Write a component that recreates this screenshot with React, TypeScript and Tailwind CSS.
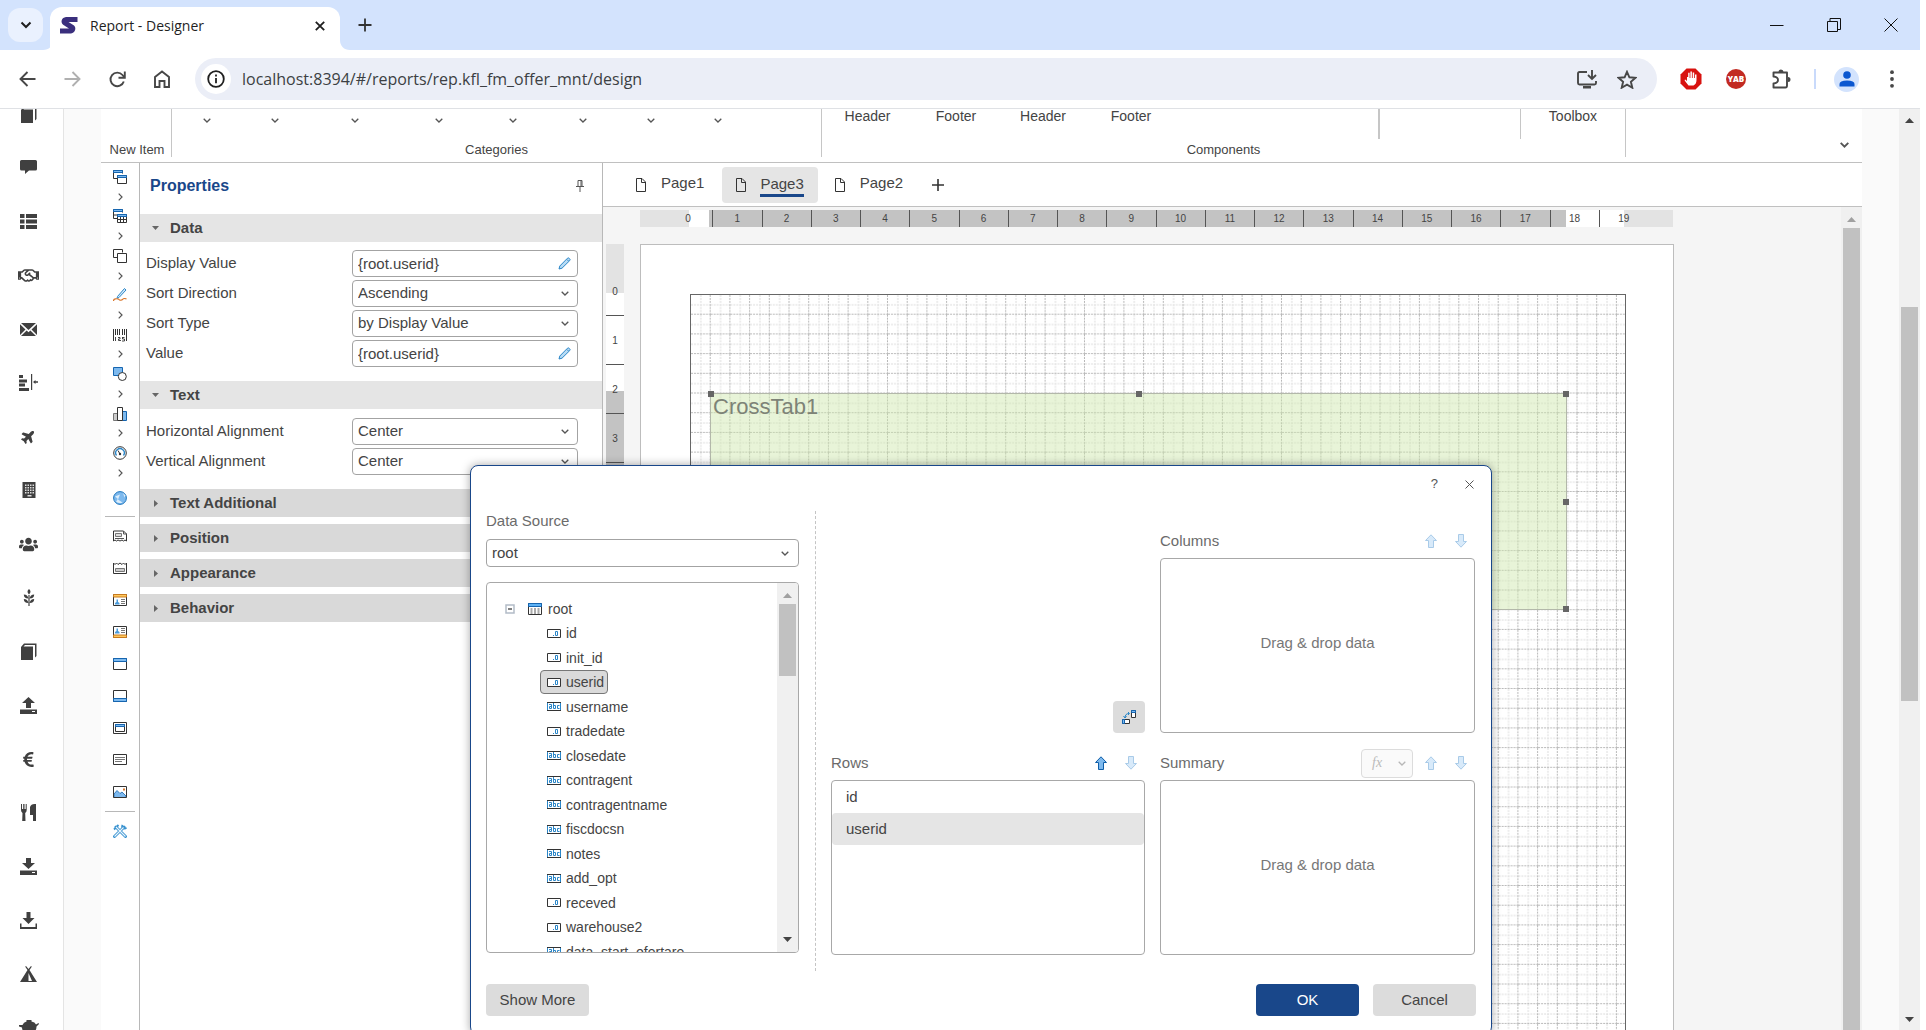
import React from "react";
import { FaRegHandshake, FaPlane, FaUsers, FaEuroSign } from "react-icons/fa";

type SvgProps = { w?: number; h?: number; box?: string; className?: string; children: React.ReactNode };

function Svg({ w = 16, h = 16, box, className = "", children }: SvgProps) {
  return (
    <svg width={w} height={h} viewBox={box ?? `0 0 ${w} ${h}`} fill="none" className={`block shrink-0 ${className}`} aria-hidden="true">
      {children}
    </svg>
  );
}

const Chevron = ({ className = "" }: { className?: string }) => (
  <Svg w={8} h={5} className={className}>
    <path d="M.7.7 4 4 7.3.7" stroke="#555" strokeWidth="1.3" />
  </Svg>
);

const Tri = ({ up = false, color = "#444" }: { up?: boolean; color?: string }) => (
  <Svg w={9} h={5}>
    <path d={up ? "M0 5 4.5 0 9 5Z" : "M0 0 4.5 5 9 0Z"} fill={color} />
  </Svg>
);

/* ---------- Browser chrome ---------- */

function TabStrip() {
  return (
    <header className="flex h-[50px] shrink-0 items-end bg-[#d3e3fd] pl-2">
      <button aria-label="Search tabs" className="mb-2 flex h-[34px] w-[35px] items-center justify-center rounded-xl bg-[#eaf1fe]">
        <Svg w={12} h={8}>
          <path d="m1.5 1.5 4.5 4.5 4.5-4.5" stroke="#1f1f1f" strokeWidth="2" />
        </Svg>
      </button>
      <Svg w={10} h={10} className="-mr-px">
        <path d="M10 0v10H0C6 10 10 6 10 0Z" fill="#fff" />
      </Svg>
      <div className="ml-[-2px] flex h-[43px] w-[290px] items-center rounded-t-xl bg-white pb-1.5 pl-[10px]">
        <Svg w={18} h={17}>
          <path d="M6 0H17.500V5H8.500L14 8.500C16.500 10.500 15.500 16 11 16.500H0V11.500H9L3.500 8C0 5.500 1.500.5 6 0Z" fill="#3a2f7d" />
        </Svg>
        <span className="ml-3 flex-1 text-sm text-[#1f1f1f]">Report - Designer</span>
        <button aria-label="Close tab" className="mr-[15px]">
          <Svg w={10} h={10}>
            <path d="m.8.8 8.400 8.400M9.200.8.8 9.200" stroke="#1f1f1f" strokeWidth="1.800" />
          </Svg>
        </button>
      </div>
      <Svg w={10} h={10}>
        <path d="M0 0v10H10C4 10 0 6 0 0Z" fill="#fff" />
      </Svg>
      <button aria-label="New tab" className="mb-[18px] ml-2">
        <Svg w={14} h={14}>
          <path d="M7 .5v13M.5 7h13" stroke="#333" strokeWidth="1.800" />
        </Svg>
      </button>
      <div className="mb-[18px] ml-auto flex items-center gap-[43px] pr-[22px]">
        <button aria-label="Minimize">
          <Svg w={14} h={14}><path d="M0 7.500h13.500" stroke="#111" /></Svg>
        </button>
        <button aria-label="Restore">
          <Svg w={14} h={14}><path d="M.5 3.500h10v10H.5ZM3 3V.5h10.500v11H11" stroke="#111" /></Svg>
        </button>
        <button aria-label="Close window">
          <Svg w={14} h={14}><path d="m.5.5 13 13M13.500.5l-13 13" stroke="#111" /></Svg>
        </button>
      </div>
    </header>
  );
}

function AddressBar() {
  return (
    <nav className="flex h-[59px] shrink-0 items-center border-b border-[#dfe1e5] bg-white pl-[19px] pr-[25px]">
      <button aria-label="Back">
        <Svg w={17} h={16}><path d="M16.500 8H1.500M8.500 1 1.500 8l7 7" stroke="#474747" strokeWidth="1.900" /></Svg>
      </button>
      <button aria-label="Forward" className="ml-7">
        <Svg w={17} h={16}><path d="M.5 8h15M8.500 1l7 7-7 7" stroke="#b0b0b0" strokeWidth="1.900" /></Svg>
      </button>
      <button aria-label="Reload" className="ml-7">
        <Svg w={17} h={17}>
          <path d="M14.800 10.500A6.800 6.800 0 1 1 13.500 4L15 5.800" stroke="#474747" strokeWidth="1.900" />
          <path d="M15.800.5v6.300H9.500" stroke="#474747" strokeWidth="1.900" />
        </Svg>
      </button>
      <button aria-label="Home" className="ml-7">
        <Svg w={16} h={18}><path d="M1 7 8 1.500 15 7v10h-4.500v-6h-5v6H1Z" stroke="#474747" strokeWidth="1.900" /></Svg>
      </button>
      <div className="ml-[25px] flex h-[42px] flex-1 items-center rounded-full bg-[#ebeef7] pl-[6px] pr-[20px]">
        <span className="flex size-[30px] items-center justify-center rounded-full bg-white">
          <Svg w={18} h={18}>
            <circle cx="9" cy="9" r="7.800" stroke="#1f1f1f" strokeWidth="1.800" />
            <path d="M9 8v5.200M9 4.600v1.900" stroke="#1f1f1f" strokeWidth="1.800" />
          </Svg>
        </span>
        <input aria-label="Address" defaultValue="localhost:8394/#/reports/rep.kfl_fm_offer_mnt/design" className="ml-[11px] min-w-0 flex-1 bg-transparent text-base text-[#3c3f43] outline-none" />
        <Svg w={20} h={19} className="mr-5">
          <path d="M10 2H2.500Q1 2 1 3.500V13Q1 14.500 2.500 14.500H17.500Q19 14.500 19 13V11" stroke="#474747" strokeWidth="1.900" />
          <path d="M6 16h8v2.500H6Z" fill="#474747" />
          <path d="M15 0v8M11 5l4 4 4-4" stroke="#474747" strokeWidth="1.900" />
        </Svg>
        <Svg w={20} h={19}>
          <path d="m10 1.800 2.400 5.500 6 .5-4.500 4 1.400 5.900L10 14.600l-5.300 3.100 1.400-5.900-4.500-4 6-.5Z" stroke="#474747" strokeWidth="1.900" />
        </Svg>
      </div>
      <Svg w={22} h={22} className="ml-[23px]">
        <path d="M6.500.5h9l6 6v9l-6 6h-9l-6-6v-9Z" fill="#d8120f" />
        <path d="M7 9v4l-1.800-1.500Q4 11.500 5 13l3.500 4.500h5Q16.500 16 16.500 12V6.500H15V10h-.8V4.500h-1.500V10h-.8V3.500h-1.500V10h-.8V4.800H8.200V9Z" fill="#fff" />
      </Svg>
      <span className="ml-6 flex size-5 items-center justify-center rounded-full bg-[#c22a22] text-[8px] font-black text-white">YAB</span>
      <Svg w={21} h={20} className="ml-[26px]">
        <path d="M1.500 3.500H15V16.500Q15 18.500 13.500 18.500H1.500V14.500Q6 14 6 11 6 8 1.500 7.500Z" stroke="#474747" strokeWidth="1.900" strokeLinejoin="round" />
        <path d="M6.500 3a2.500 2.500 0 0 1 5 0ZM16 8a2.500 2.500 0 0 1 0 5Z" fill="#474747" />
      </Svg>
      <span className="ml-[21px] h-5 w-0.5 bg-[#c9dafb]" />
      <button aria-label="Profile" className="ml-[18px] flex size-[25px] items-center justify-center rounded-full bg-[#d3e3fd]">
        <Svg w={16} h={16}>
          <circle cx="8" cy="4" r="3.800" fill="#0b57d0" />
          <path d="M.5 15.500V13Q.5 9.500 8 9.500T15.500 13v2.500Z" fill="#0b57d0" />
        </Svg>
      </button>
      <button aria-label="Menu" className="ml-[30px]">
        <Svg w={6} h={18}>
          <circle cx="3" cy="2.200" r="1.900" fill="#474747" />
          <circle cx="3" cy="9" r="1.900" fill="#474747" />
          <circle cx="3" cy="15.800" r="1.900" fill="#474747" />
        </Svg>
      </button>
    </nav>
  );
}

/* ---------- Application sidebar ---------- */

const G = "#404040";

const BookIcon = () => (
  <Svg w={17} h={17}>
    <path d="M1 4 4 .5H16.500V13L15 14.500V2H5L3.500 3.500H13V17H1Z" fill={G} />
  </Svg>
);

const TrayDown = () => (
  <Svg w={17} h={17}>
    <path d="M6 0h5v5h4l-6.500 6L2 5h4Z" fill={G} />
    <path d="M0 12.500h17V17H0Z" fill={G} />
    <path d="M12 14.500h3" stroke="#fff" />
  </Svg>
);

const sidebar: { name: string; icon: React.ReactNode }[] = [
  { name: "Catalog", icon: <BookIcon /> },
  { name: "Messages", icon: <Svg w={17} h={17}><path d="M1.500 1h14q1.500 0 1.500 1.500V10q0 1.500-1.500 1.500H9L5 15v-3.500H1.500Q0 11.500 0 10V2.500Q0 1 1.500 1Z" fill={G} /></Svg> },
  { name: "Lists", icon: <Svg w={17} h={17}><path d="M0 1h4.500v4H0Zm6 0h11v4H6ZM0 6.500h4.500v4H0Zm6 0h11v4H6ZM0 12h4.500v4H0Zm6 0h11v4H6Z" fill={G} /></Svg> },
  { name: "Partners", icon: <FaRegHandshake size={21} color={G} /> },
  { name: "Mail", icon: <Svg w={17} h={17}><path d="M1 2h15L8.500 9ZM0 3.200 5.500 8.500 0 14ZM17 3.200 11.500 8.500 17 14ZM6.600 9.500l1.900 1.700 1.900-1.700L16 15H1Z" fill={G} /></Svg> },
  { name: "Alignment", icon: <Svg w={20} h={17}><path d="M0 1h4v3H0Zm0 4.500h8v3H0ZM0 9.500h6v3H0Zm0 4.500h10v3H0ZM12 0h1.200v16H12ZM14 8l2.500-2v1.300H19v1.400h-2.500V10Z" fill={G} /></Svg> },
  { name: "Travel", icon: <FaPlane size={15} color={G} className="-rotate-45" /> },
  { name: "Calculator", icon: <Svg w={14} h={18}><path d="M.5 1h13v16H.5Z" fill={G} /><path d="M3 3.500h1.500V5H3Zm2.500 0H7V5H5.500Zm2.500 0h1.500V5H8Zm2.500 0H12V5h-1.500ZM3 6h1.500v1.500H3Zm2.500 0H7v1.500H5.500ZM8 6h1.500v1.500H8Zm2.500 0H12v1.500h-1.500ZM3 8.500h1.500V10H3Zm2.500 0H7V10H5.500Zm2.500 0h1.500V10H8Zm2.500 0H12V10h-1.500ZM3 11h1.500v1.500H3Zm2.500 0H7v1.500H5.500ZM8 11h1.500v1.500H8Zm2.500 0H12v1.500h-1.500ZM5.500 14h4v1.500h-4Z" fill="#ddd" /></Svg> },
  { name: "Users", icon: <FaUsers size={19} color={G} /> },
  { name: "Crops", icon: <Svg w={12} h={17}><path d="M6 0q3 2.500 0 5.500Q3 2.500 6 0ZM.8 5.500q4 0 4.500 4-4.500 0-4.500-4Zm10.400 0q-4 0-4.500 4 4.500 0 4.500-4ZM.8 10q4 0 4.500 4-4.500 0-4.500-4Zm10.400 0q-4 0-4.500 4 4.500 0 4.500-4ZM5.400 6h1.200v11H5.400Z" fill={G} /></Svg> },
  { name: "Books", icon: <BookIcon /> },
  { name: "Upload", icon: <Svg w={17} h={17}><path d="M6 11h5V6h4L8.500 0 2 6h4ZM0 12.500h17V17H0Z" fill={G} /><path d="M12 14.500h3" stroke="#fff" /></Svg> },
  { name: "Currency", icon: <FaEuroSign size={17} color={G} /> },
  { name: "Food", icon: <Svg w={17} h={17}><path d="M1 0h1v5h1.200V0h1.300v5h1.200V0h1v6q0 2-1.500 3l.3 8H2.200l.3-8Q1 8 1 6ZM10 3q1-3 4.500-3H16v17h-3v-6h-3Z" fill={G} /></Svg> },
  { name: "Download", icon: <TrayDown /> },
  { name: "Save", icon: <Svg w={17} h={17}><path d="M6.500 0h4v6h4L8.500 12l-6-6h4ZM0 11.500h1.500V15h14v-3.500H17V17H0Z" fill={G} /></Svg> },
  { name: "Camping", icon: <Svg w={17} h={17}><path fillRule="evenodd" d="M6 0 8.500 3 11 0l.8.7L9.500 4 17 16H0L7.500 4 5.200.7ZM8.500 7v8h3.500Z" fill={G} /></Svg> },
  { name: "Savings", icon: <Svg w={20} h={17}><path d="M7.500 1h5v1.500Q16 3 17 5.500L19.500 4 20 5l-2.500 2.500q0 4-3 6V17h-2v-2H7.500v2h-2v-3.500q-2.500-2-2.500-5L0 7.500V6h3.500Q4.500 3 7.500 2.500Z" fill={G} /></Svg> },
];

function Sidebar() {
  return (
    <aside className="flex w-16 shrink-0 flex-col overflow-hidden border-r border-[#e4e4e4] bg-white">
      <nav className="-mb-[7px] -mt-1 flex flex-1 flex-col items-center justify-between pr-1.5">
        {sidebar.map((s) => (
          <button key={s.name} aria-label={s.name} className="flex h-[18px] shrink-0 items-center">
            {s.icon}
          </button>
        ))}
      </nav>
    </aside>
  );
}

/* ---------- Ribbon ---------- */

const categoryWidths = ["w-[70px]", "w-[66px]", "w-[94px]", "w-[74px]", "w-[74px]", "w-[66px]", "w-[70px]", "w-[64px]"];

function Ribbon() {
  return (
    <section className="flex h-[54px] shrink-0 border-b border-[#c0c0c0] pb-[5px] text-[13px] text-[#444]">
      <div className="flex w-[71px] shrink-0 flex-col justify-end border-r border-[#c6c6c6] pl-0.5 text-center">
        <span className="leading-[15px]">New Item</span>
      </div>
      <div className="flex w-[650px] shrink-0 flex-col justify-between border-r border-[#c6c6c6] text-center">
        <div className="flex">
          {categoryWidths.map((w, i) => (
            <button key={i} aria-label={`Category ${i + 1}`} className={`${w} flex justify-center pt-[9px]`}>
              <Chevron />
            </button>
          ))}
        </div>
        <span className="leading-[15px]">Categories</span>
      </div>
      <div className="flex w-[804px] shrink-0 flex-col justify-between border-r border-[#c6c6c6] text-center">
        <div className="flex h-[30px] text-sm leading-[14px]">
          <button className="flex w-[91px] justify-center">Header</button>
          <button className="flex w-[86px] justify-center">Footer</button>
          <button className="flex w-[88px] justify-center">Header</button>
          <button className="flex w-[88px] justify-center">Footer</button>
          <span className="flex-1 border-r-2 border-[#c6c6c6]" />
          <span className="w-[141px] border-r border-[#c6c6c6]" />
          <button className="flex w-[104px] justify-center">Toolbox</button>
        </div>
        <span className="leading-[15px]">Components</span>
      </div>
      <button aria-label="Collapse ribbon" className="mb-[9px] ml-auto mr-[13px] self-end">
        <Svg w={9} h={6}><path d="m.7.9 3.800 3.700L8.300.9" stroke="#555" strokeWidth="1.900" /></Svg>
      </button>
    </section>
  );
}

/* ---------- Vertical toolbox ---------- */

const K = "#333";
const B = "#1565b0";
const L = "#7db9ee";

const groupTools: { name: string; icon: React.ReactNode }[] = [
  { name: "Bands", icon: <Svg w={14} h={14}><path d="M4 8.500H.5V.5h9v3" stroke={K} /><path d="M.5.5h9v2h-9Z" fill={L} stroke={B} /><path d="M4.500 5.500h9v8h-9Z" stroke={K} fill="#fff" /><path d="M4.500 5.500h9v2h-9Z" fill={L} stroke={B} /></Svg> },
  { name: "Cross bands", icon: <Svg w={14} h={14}><path d="M4 9.500H.5V.5h9v3M1 6h3" stroke={K} /><path d="M.5.5h9v2h-9Z" fill={L} stroke={B} /><path d="M4.500 5.500h9v8h-9ZM5 10.500h8M7.500 8v5M10.500 8v5" stroke={K} /><path d="M4.500 5.500h9v2h-9Z" fill={L} stroke={B} /></Svg> },
  { name: "Components", icon: <Svg w={14} h={14}><path d="M4 8.500H.5V.5h9v3M4.500 4.500h9v9h-9Z" stroke={K} /></Svg> },
  { name: "Signatures", icon: <Svg w={14} h={14}><path d="m4.500 8.500 7-8 1.500 1.500-7 7.500-2 .8Z" stroke="#2a86c8" fill="#d5eafa" /><path d="M.5 13q0-2 2-2.200 3-.3 3.500.7t2 .7 2-1.200 3.500-.2" stroke="#d9762b" strokeWidth="1.200" /></Svg> },
  { name: "Barcodes", icon: <Svg w={14} h={14}><path d="M.5 1v12M2.500 1v6M4.500 1v6M6.500 1v6M9.500 1v6M11.500 1v6M13.500 1v12" stroke={K} /><path d="M2.500 9v4M5 9.500h2v1.500H5.500v1.500H8M9 9.500h2.500M9.500 9.500v1.500h2v2H9" stroke={K} strokeWidth=".9" /></Svg> },
  { name: "Shapes", icon: <Svg w={14} h={14}><path d="M.5.5h9v8h-9Z" fill={L} stroke={B} /><circle cx="9.300" cy="9.500" r="4" fill="#fff" stroke={K} /></Svg> },
  { name: "Charts", icon: <Svg w={14} h={14}><path d="M.5 6.500h4v7h-4Z" fill="#ccc" stroke="#777" /><path d="M9.500 4.500h4v9h-4Z" fill={L} stroke={B} /><path d="M4.500.5h5v13h-5Z" fill="#fff" stroke={K} /></Svg> },
  { name: "Gauges", icon: <Svg w={14} h={14}><circle cx="7" cy="7" r="6.300" stroke={K} /><path d="M3.500 9.500a4.300 4.300 0 1 1 7 0" stroke="#2a86c8" strokeWidth="1.400" /><path d="M7 8 5 4.500" stroke={K} /><circle cx="7" cy="8" r="1.200" fill={K} /></Svg> },
];

const bandTools: { name: string; icon: React.ReactNode }[] = [
  { name: "Report title", icon: <Svg w={14} h={14}><path d="M.5 2v10l1.500-1 1.500 1L5 11l2 1 2-1 1.500 1 1.500-1 1.500 1V5L10.500 2Z" stroke={K} /><path d="M2.500 4.500h6v3h-6Z" fill="#ddd" stroke="#777" /><path d="M10.500 2v3H14M2 9.500h9" stroke="#555" /></Svg> },
  { name: "Report summary", icon: <Svg w={14} h={14}><path d="M.5 2l1.500 1.500L3.500 2 5 3.500 7 2l2 1.500L10.500 2 12 3.500 13.500 2v10.500H.5Z" stroke={K} /><path d="M2.500 7.500h9v3h-9Z" fill="#ccc" stroke="#777" /></Svg> },
  { name: "Page header", icon: <Svg w={14} h={14}><path d="M.5 1.500h13v11H.5Z" stroke={K} /><path d="M.5 1.500h13v2.500H.5Z" fill="#ffc95e" stroke="#c87a1e" /><path d="M8 6.500h4M8 8.500h4M8 10.500h4" stroke="#777" /><path d="M2 11.500V10l1.500-1V6.500H5V9l1.500 1v1.500Z" fill="#4a9bdc" /></Svg> },
  { name: "Page footer", icon: <Svg w={14} h={14}><path d="M.5 1.500h13v11H.5Z" stroke={K} /><path d="M.5 10h13v2.500H.5Z" fill="#ffc95e" stroke="#c87a1e" /><path d="M8 3.500h4M8 5.500h4M8 7.500h4" stroke="#777" /><path d="M2 8.500V7l1.500-1V3.500H5V6l1.500 1v1.500Z" fill="#4a9bdc" /></Svg> },
  { name: "Header", icon: <Svg w={14} h={14}><path d="M.5 1.500h13v11H.5Z" stroke={K} /><path d="M.5 1.500h13v3H.5Z" fill={L} stroke={B} /></Svg> },
  { name: "Footer", icon: <Svg w={14} h={14}><path d="M.5 1.500h13v11H.5Z" stroke={K} /><path d="M.5 9.500h13v3H.5Z" fill={L} stroke={B} /></Svg> },
  { name: "Data", icon: <Svg w={14} h={14}><path d="M.5 1.500h13v11H.5ZM2.500 3.500h9v7h-9Z" stroke={K} /><path d="M2.500 3.500h9v2h-9Z" fill={L} stroke={B} /></Svg> },
  { name: "Text", icon: <Svg w={14} h={14}><path d="M.5 1.500h13v10H.5Z" stroke={K} /><path d="M2 4.500h10M2 6.500h10M2 8.500h7" stroke="#777" /></Svg> },
  { name: "Image", icon: <Svg w={14} h={14}><path d="M1 9 4 5.500l3 3 2-1.500 4 4v1.500H1Z" fill={L} stroke={B} strokeWidth=".8" /><path d="M10 3.500h2v2h-2Z" fill="#d9762b" /><path d="M.5 1.500h13v11H.5Z" stroke={K} /></Svg> },
];

function Toolbox() {
  return (
    <div className="flex w-[39px] shrink-0 flex-col items-center border-r border-[#b8b8b8] pt-[7px]">
      <div className="flex h-[310px] shrink-0 flex-col items-center justify-between">
        {groupTools.map((t) => (
          <React.Fragment key={t.name}>
            <button aria-label={t.name}>{t.icon}</button>
            <button aria-label={`${t.name} menu`} className="flex h-[14px] items-center">
              <Svg w={5} h={8}><path d="M.7.7 4 4 .7 7.300" stroke="#555" strokeWidth="1.200" /></Svg>
            </button>
          </React.Fragment>
        ))}
      </div>
      <button aria-label="Maps" className="mt-[11px]">
        <Svg w={14} h={14}>
          <circle cx="7" cy="7" r="6.400" fill="#7db9ee" stroke="#1f76bd" />
          <path d="M2 5.500 7 3.500 5 8.500 9.500 11.500Q6 13 3 10.500 5 9 4.500 7.500ZM10 2l2.500 2.500-1 2Z" fill="#dceefc" />
        </Svg>
      </button>
      <hr className="mb-[12px] mt-[11px] w-[30px] border-[#b8b8b8]" />
      <div className="flex flex-col gap-[18px]">
        {bandTools.map((t) => (
          <button key={t.name} aria-label={t.name}>{t.icon}</button>
        ))}
      </div>
      <hr className="mb-[12px] mt-[12px] w-[30px] border-[#b8b8b8]" />
      <button aria-label="Toolbox setup">
        <Svg w={14} h={14}>
          <path d="m3 3 9.500 9.500M11 3l-9.500 9.500" stroke="#3a93d0" strokeWidth="3" strokeLinecap="round" />
          <path d="M1 5.500 5.500 1M9.500.8q-1 2.500.5 3.300 2 1.200 3.400-.6" stroke="#3a93d0" strokeWidth="1.800" />
          <path d="m3 3 9.500 9.500M10.500 3.500l-9 9" stroke="#eaf5fd" strokeWidth="1.100" />
        </Svg>
      </button>
    </div>
  );
}

/* ---------- Properties panel ---------- */

const Pencil = () => (
  <Svg w={13} h={13}>
    <path d="m1 12 .8-3L9.500 1.200Q10.300.5 11.200 1.300l.5.5Q12.500 2.700 11.800 3.500L4 11.200Z" stroke="#2a86c8" fill="#b9dcf5" />
    <path d="M9 2.500 10.500 4" stroke="#2a86c8" />
  </Svg>
);

function Field({ label, value, kind }: { label: string; value: string; kind: "text" | "select" }) {
  const id = label.toLowerCase().replace(/ /g, "-");
  return (
    <div className="flex h-[27px] items-center">
      <label htmlFor={id} className="w-[208px] shrink-0 pl-0.5">{label}</label>
      <div className="relative flex h-full flex-1 items-center">
        {kind === "text" ? (
          <input id={id} defaultValue={value} className="h-full w-full rounded border border-[#a3a3a3] bg-white pl-[5px] outline-none" />
        ) : (
          <select id={id} defaultValue={value} className="h-full w-full appearance-none rounded border border-[#a3a3a3] bg-white pl-[5px] outline-none">
            <option>{value}</option>
          </select>
        )}
        <span className="pointer-events-none absolute right-[6px] flex w-[15px] justify-center">
          {kind === "text" ? <Pencil /> : <Chevron />}
        </span>
      </div>
    </div>
  );
}

function SectionHead({ title, open = false }: { title: string; open?: boolean }) {
  return (
    <button className={`flex h-7 w-full items-center pl-[12px] text-[15px] font-bold ${open ? "bg-[#e5e5e5]" : "bg-[#d9d9d9]"}`}>
      <span className="mr-[11px] flex w-[7px] justify-center">
        {open ? (
          <Svg w={7} h={4}><path d="M0 0h7L3.500 4Z" fill="#666" /></Svg>
        ) : (
          <Svg w={4} h={7}><path d="M0 0v7l4-3.500Z" fill="#666" /></Svg>
        )}
      </span>
      {title}
    </button>
  );
}

function Properties() {
  return (
    <section className="flex w-[463px] shrink-0 flex-col border-r border-[#b8b8b8] text-[15px] text-[#444]">
      <div className="flex h-[51px] items-center justify-between pb-1.5 pl-[10px] pr-[18px]">
        <h2 className="text-base font-bold text-[#19478a]">Properties</h2>
        <button aria-label="Pin panel">
          <Svg w={8} h={12}><path d="M2 .5h4v6H2ZM5 1v5M0 6.500h8M4 7v5" stroke="#555" /></Svg>
        </button>
      </div>
      <SectionHead title="Data" open />
      <div className="flex flex-col gap-[3px] py-2 pl-1 pr-6 pb-[14px]">
        <Field label="Display Value" value="{root.userid}" kind="text" />
        <Field label="Sort Direction" value="Ascending" kind="select" />
        <Field label="Sort Type" value="by Display Value" kind="select" />
        <Field label="Value" value="{root.userid}" kind="text" />
      </div>
      <SectionHead title="Text" open />
      <div className="flex flex-col gap-[3px] pl-1 pr-6 pb-[14px] pt-[9px]">
        <Field label="Horizontal Alignment" value="Center" kind="select" />
        <Field label="Vertical Alignment" value="Center" kind="select" />
      </div>
      <div className="flex flex-col gap-[7px]">
        <SectionHead title="Text Additional" />
        <SectionHead title="Position" />
        <SectionHead title="Appearance" />
        <SectionHead title="Behavior" />
      </div>
    </section>
  );
}

/* ---------- Design surface ---------- */

const PageIcon = () => (
  <Svg w={10} h={14}>
    <path d="M.5.5H6L9.500 4v9.500h-9ZM5.500.5v4h4" stroke="#333" />
  </Svg>
);

function PageTabs() {
  return (
    <div className="flex h-11 shrink-0 items-start border-b border-[#c0c0c0] pl-[19px] pt-1 text-[15px] text-[#444]">
      <button className="flex h-9 items-center gap-[15px] pl-[14px] pr-[18px]"><PageIcon /><span className="mb-1">Page1</span></button>
      <button className="flex h-9 items-center gap-[14px] rounded bg-[#e5e5e5] px-[14px]">
        <PageIcon />
        <span className="border-b-[3px] border-[#19478a] leading-5">Page3</span>
      </button>
      <button className="flex h-9 items-center gap-[15px] pl-[17px] pr-[14px]"><PageIcon /><span className="mb-1">Page2</span></button>
      <button aria-label="Add page" className="flex h-9 items-center pl-[15px]">
        <Svg w={12} h={12}><path d="M6 0v12M0 6h12" stroke="#333" strokeWidth="1.600" /></Svg>
      </button>
    </div>
  );
}

function HorizontalRuler() {
  return (
    <div className="ml-[34px] grid h-[17px] w-[1033px] shrink-0 text-[10px] text-[#444]">
      <div className="col-start-1 row-start-1 flex bg-[#e3e3e3] pl-[49px] pr-[49px]">
        <span className="w-5 bg-white" />
        <span className="flex-1 bg-[#c3c3c3]" />
        <span className="w-[58px] bg-white" />
      </div>
      <div className="col-start-1 row-start-1 flex px-6">
        {Array.from({ length: 20 }, (_, n) => (
          <span key={n} className="flex flex-1 items-center justify-center border-r border-[#555] last:border-transparent">{n}</span>
        ))}
      </div>
    </div>
  );
}

function VerticalRuler() {
  return (
    <div className="grid w-[18px] shrink-0 content-start overflow-hidden bg-[#c3c3c3] text-[10px] text-[#444]">
      <div className="col-start-1 row-start-1 flex flex-col bg-[#c3c3c3]">
        <span className="h-[49px] bg-[#e3e3e3]" />
        <span className="h-[98px] bg-white" />
      </div>
      <div className="col-start-1 row-start-1 flex flex-col pt-[23px]">
        {Array.from({ length: 4 }, (_, n) => (
          <span key={n} className="flex h-[49px] items-center justify-center border-b border-[#555]">{n}</span>
        ))}
      </div>
    </div>
  );
}

function GridLines() {
  return (
    <svg className="absolute inset-0 h-full w-full" aria-hidden="true">
      <defs>
        <pattern id="cells" width="19.700" height="19.700" patternUnits="userSpaceOnUse">
          <path d="M9.850 0V19.700M0 9.850H19.700" stroke="#dcdcdc" strokeDasharray="2 1" />
          <path d="M19.200 0V19.700M0 19.200H19.700" stroke="#b8b8b8" strokeDasharray="2 1" />
        </pattern>
      </defs>
      <rect width="100%" height="100%" fill="url(#cells)" />
    </svg>
  );
}

const handles = [
  "left-[-3px] top-[-3px]",
  "left-[calc(50%-3px)] top-[-3px]",
  "right-[-3px] top-[-3px]",
  "right-[-3px] top-[calc(50%-3px)]",
  "right-[-3px] bottom-[-3px]",
];

function DesignSurface() {
  return (
    <section className="flex min-w-0 flex-1 flex-col">
      <PageTabs />
      <div className="flex min-h-0 flex-1 bg-[#f5f5f5]">
        <div className="flex min-w-0 flex-1 flex-col overflow-hidden pl-[3px] pt-[3px]">
          <HorizontalRuler />
          <div className="mt-[17px] flex min-h-0 flex-1">
            <VerticalRuler />
            <div className="ml-4 flex w-[1034px] shrink-0 border-x border-t border-[#bdbdbd] bg-white pl-[49px] pr-[47px] pt-[49px]">
              <div className="relative flex-1 border-x border-t border-[#666]">
                <GridLines />
                <div className="absolute left-[19px] right-[58px] top-[98px] h-[217px] border border-[#b3b8aa] bg-[#cce6a8]/45 pl-0.5 text-[22px] leading-[26px] text-[#7d8377]">
                  CrossTab1
                  {handles.map((h) => (
                    <span key={h} className={`absolute size-[6px] bg-[#666] ${h}`} />
                  ))}
                </div>
              </div>
            </div>
          </div>
        </div>
        <div className="flex w-[21px] shrink-0 flex-col items-center bg-[#f0f0f0]">
          <span className="flex h-[21px] items-center pt-1"><Tri up color="#a0a0a0" /></span>
          <span className="w-[17px] flex-1 bg-[#c1c1c1]" />
        </div>
      </div>
    </section>
  );
}

/* ---------- Cross-tab dialog ---------- */

const fields: [string, "num" | "abc"][] = [
  ["id", "num"],
  ["init_id", "num"],
  ["userid", "num"],
  ["username", "abc"],
  ["tradedate", "num"],
  ["closedate", "abc"],
  ["contragent", "abc"],
  ["contragentname", "abc"],
  ["fiscdocsn", "abc"],
  ["notes", "abc"],
  ["add_opt", "abc"],
  ["receved", "num"],
  ["warehouse2", "num"],
  ["data_start_ofertare", "abc"],
];

const FieldIcon = ({ kind }: { kind: "num" | "abc" }) =>
  kind === "num" ? (
    <Svg w={14} h={9}>
      <path d="M.5.5h13v8H.5Z" stroke={K} fill="#fff" />
      <path d="M6 6.500h1M8.500 2.500h2v4h-2Z" stroke="#2a86c8" />
    </Svg>
  ) : (
    <Svg w={14} h={9}>
      <path d="M0 .5h14M0 8.500h14" stroke={K} />
      <path d="M.5 1v7M13.500 1v7" stroke="#2a86c8" />
      <path d="M2 2.500h2.500v4H2.500V4.500H4M6.500 1v5.500h2v-3h-2M12.500 3.500h-2v3h2" stroke="#2a86c8" />
    </Svg>
  );

function Arrow({ down = false, active = false, label }: { down?: boolean; active?: boolean; label: string }) {
  return (
    <button aria-label={label} className="flex w-[14px] justify-center">
      <Svg w={14} h={14} className={down ? "rotate-180" : ""}>
        <path d="M7 .8 12.500 6.500H9.500v7h-5v-7h-3Z" fill={active ? L : "#d8eafa"} stroke={active ? "#0f5ea8" : "#a9cbe8"} />
      </Svg>
    </button>
  );
}

function ListBox({ title, items, extra, active }: { title: string; items?: string[]; extra?: React.ReactNode; active?: boolean }) {
  return (
    <div className="flex flex-col">
      <div className="flex h-[34px] items-center text-[#6b6b6b]">
        <span className="mr-auto">{title}</span>
        {extra}
        <span className="flex gap-4 pl-[11px] pr-[7px]">
          <Arrow label={`Move ${title} up`} active={active} />
          <Arrow label={`Move ${title} down`} down />
        </span>
      </div>
      <div className="h-[175px] rounded border border-[#a8a8a8]">
        {items ? (
          items.map((it, i) => (
            <div key={it} className={`flex h-8 items-center pl-[14px] text-[#444] ${i === 1 ? "rounded bg-[#e5e5e5]" : ""}`}>{it}</div>
          ))
        ) : (
          <p className="flex h-full items-center justify-center pb-1 text-[#777]">Drag &amp; drop data</p>
        )}
      </div>
    </div>
  );
}

function FieldTree() {
  return (
    <div className="flex h-[371px] overflow-hidden rounded border border-[#a8a8a8] text-sm">
      <div className="flex flex-1 flex-col pl-[18px] pt-[14px]">
        <div className="flex h-6 shrink-0 items-center leading-4">
          <button aria-label="Collapse root" className="mr-[13px]">
            <Svg w={10} h={10}><path d="M1 1h8v8H1Z" stroke="#b3bcc7" strokeWidth="1.500" /><path d="M3 5h4" stroke="#555" strokeWidth="1.400" /></Svg>
          </button>
          <Svg w={14} h={12}>
            <path d="M.5.5h13v11H.5Z" stroke={K} />
            <path d="M.5.5h13v3H.5Z" fill="#5db2f5" stroke={B} />
            <path d="M2.500 6h9M2.500 8h9M2.500 10h9" stroke="#555" strokeDasharray="2 1.500" />
          </Svg>
          <span className="ml-1.5">root</span>
        </div>
        <ul className="-mb-3 flex flex-1 flex-col items-start justify-between pl-[35px]">
          {fields.map(([name, kind]) => (
            <li key={name} className={`flex h-6 items-center rounded border pr-[3px] leading-4 ${name === "userid" ? "border-[#777] bg-[#dadada]" : "border-transparent"}`}>
              <span className="pl-1.5 pr-[5px]"><FieldIcon kind={kind} /></span>
              {name}
            </li>
          ))}
        </ul>
      </div>
      <div className="flex w-[21px] shrink-0 flex-col items-center bg-[#f0f0f0] pb-[10px] pt-[10px]">
        <Tri up color="#a0a0a0" />
        <span className="mt-[6px] h-[72px] w-[17px] bg-[#c1c1c1]" />
        <span className="mt-auto"><Tri /></span>
      </div>
    </div>
  );
}

function CrossTabDialog() {
  return (
    <div role="dialog" aria-label="Cross-Tab" className="absolute left-[470px] top-[356px] flex h-[570px] w-[1022px] flex-col rounded-lg border border-[#19478a] bg-white text-[15px] text-[#444] shadow-[0_0_10px_rgba(0,0,0,0.35)]">
      <div className="flex h-9 shrink-0 items-center justify-end gap-[27px] pr-[17px] text-[#555]">
        <button aria-label="Help" className="text-[13px]">?</button>
        <button aria-label="Close">
          <Svg w={9} h={9}><path d="m.5.5 8 8M8.500.5l-8 8" stroke="#555" /></Svg>
        </button>
      </div>
      <div className="flex pl-[15px] pr-4">
        <div className="flex w-[315px] flex-col pt-[9px]">
          <label htmlFor="data-source" className="pb-1 leading-5 text-[#6b6b6b]">Data Source</label>
          <div className="relative mb-[15px] mt-1 flex items-center">
            <select id="data-source" defaultValue="root" className="h-7 w-full appearance-none rounded border border-[#a3a3a3] bg-white pl-[5px] outline-none">
              <option>root</option>
            </select>
            <span className="pointer-events-none absolute right-[10px]"><Chevron /></span>
          </div>
          <FieldTree />
        </div>
        <div className="ml-4 mt-[9px] border-l border-dashed border-[#c4c4c4]" />
        <div className="grid grid-cols-[314px_315px] gap-x-[15px] gap-y-[13px] pb-4 pl-[15px] pt-[22px]">
          <div className="flex items-end justify-end">
            <button aria-label="Swap rows and columns" className="flex size-8 items-center justify-center rounded bg-[#dcdcdc]">
              <Svg w={14} h={14}>
                <path d="M9.500.5h4v7h-4ZM.5 9.500h7v4h-7Z" stroke={K} fill="#fff" />
                <path d="M9.500.5h4v2h-4ZM.5 9.500h2v4h-2Z" stroke={B} fill={L} />
                <path d="M3 8q0-4.500 4-4.500M1.500 6 3 8l1.500-2M6 2l1.500 1.500L6 5" stroke="#2a86c8" />
              </Svg>
            </button>
          </div>
          <ListBox title="Columns" />
          <ListBox title="Rows" items={["id", "userid"]} active />
          <ListBox
            title="Summary"
            extra={
              <button disabled className="flex h-[29px] w-[52px] items-center justify-between rounded border border-[#dcdcdc] bg-[#fafafa] pl-[10px] pr-1.5 font-['Liberation_Serif',serif] text-sm italic text-[#bbb]">
                fx
                <Chevron className="opacity-40" />
              </button>
            }
          />
        </div>
      </div>
      <div className="mt-[13px] flex pl-[15px] pr-[15px]">
        <button className="h-8 w-[103px] rounded bg-[#dcdcdc]">Show More</button>
        <button className="ml-auto h-8 w-[103px] rounded bg-[#19478a] text-white">OK</button>
        <button className="ml-[14px] h-8 w-[103px] rounded bg-[#dcdcdc]">Cancel</button>
      </div>
    </div>
  );
}

/* ---------- Page ---------- */

export default function App() {
  return (
    <div className="flex h-screen flex-col overflow-hidden bg-white pr-1.5 font-['Open_Sans',sans-serif]">
      <TabStrip />
      <AddressBar />
      <main className="relative flex min-h-0 flex-1 overflow-hidden bg-[#fafafa] font-['Liberation_Sans',Arial,sans-serif]">
        <Sidebar />
        <div className="ml-[37px] mr-[37px] flex min-w-0 flex-1 flex-col bg-white">
          <Ribbon />
          <div className="flex min-h-0 flex-1">
            <Toolbox />
            <Properties />
            <DesignSurface />
          </div>
        </div>
        <div className="flex w-[21px] shrink-0 flex-col items-center bg-[#f0f0f0] pb-2 pt-[9px]">
          <Tri up />
          <span className="mt-[184px] h-[394px] w-[17px] bg-[#c1c1c1]" />
          <span className="mt-auto"><Tri /></span>
        </div>
        <CrossTabDialog />
      </main>
    </div>
  );
}
